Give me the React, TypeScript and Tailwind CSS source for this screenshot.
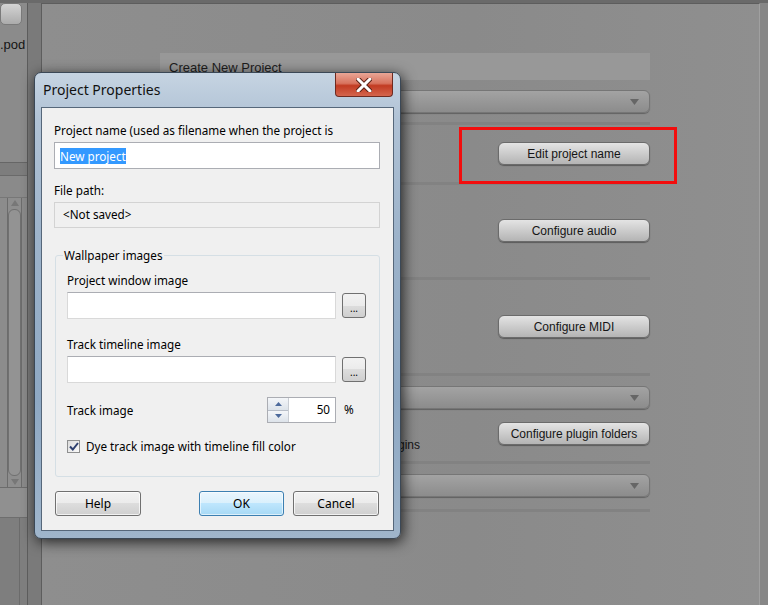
import React from "react";

function BgButton({ label }: { label: string }) {
  return (
    <div className="flex h-[23px] w-[152px] items-center justify-center rounded-[6px] border border-[#6b6b6b] bg-gradient-to-b from-[#e4e4e4] to-[#b4b4b4] text-[12px] text-[#151515] shadow-[0_1px_1px_rgba(0,0,0,0.35)]">
      {label}
    </div>
  );
}

function BgDropdown() {
  return (
    <div className="flex h-[23px] items-center justify-end rounded-[6px] border border-[#767676] bg-gradient-to-b from-[#a3a3a3] to-[#8c8c8c] pr-[10px] shadow-[0_1px_1px_rgba(0,0,0,0.3)]">
      <svg width="9" height="6" viewBox="0 0 9 6">
        <path d="M0 0 H9 L4.5 6 Z" fill="#666" />
      </svg>
    </div>
  );
}

function Sep() {
  return <div className="h-[3px] bg-[#828282]" />;
}

function WinButton({ label, focused }: { label: string; focused?: boolean }) {
  return (
    <div
      className={
        focused
          ? "flex h-[25px] w-[85px] items-center justify-center rounded-[3px] border border-[#3c7fb1] bg-[linear-gradient(#eaf6fd,#d9f0fc_50%,#bee6fd_50%,#a7d9f5)] text-[12px] text-black shadow-[inset_0_0_0_1px_rgba(255,255,255,0.6)]"
          : "flex h-[25px] w-[86px] items-center justify-center rounded-[3px] border border-[#707070] bg-[linear-gradient(#f2f2f2,#ebebeb_50%,#dddddd_50%,#cfcfcf)] text-[12px] text-black shadow-[inset_0_0_0_1px_rgba(255,255,255,0.7)]"
      }
    >
      {label}
    </div>
  );
}

function Browse() {
  return (
    <div className="ml-[6px] flex h-[25px] w-[24px] items-end justify-center rounded-[3px] border border-[#707070] bg-[linear-gradient(#f2f2f2,#ebebeb_50%,#dddddd_50%,#cfcfcf)] pb-[4px] text-[10px] leading-none text-black">
      ...
    </div>
  );
}

export default function App() {
  return (
    <div className="relative h-[605px] w-[768px] overflow-hidden bg-[#7c7c7c] font-['Liberation_Sans',Arial,sans-serif]">
      <div className="flex h-full border-t-[3px] border-[#6a6a6a]">
        {/* left side panels */}
        <div className="flex w-[28px] flex-col border-r border-[#5c5c5c]">
          <div className="h-[159px] bg-[#8b8b8b]">
            <div className="h-[22px] w-[22px] rounded-[5px] border border-[#7a7a7a] bg-gradient-to-b from-[#d4d4d4] to-[#ababab]" />
            <div className="mt-[13px] text-[13px] leading-none text-[#141414]">.pod</div>
          </div>
          <div className="h-[13px] border-t border-[#666] bg-[#7d7d7d]" />
          <div className="flex h-[313px] flex-col border-t border-[#6a6a6a] bg-[#8a8a8a]">
            <div className="h-[22px] border-b border-[#777]" />
            <div className="flex flex-1 border-b border-[#6c6c6c]">
              <div className="w-[7px] bg-[#8c8c8c]" />
              <div className="flex w-[15px] flex-col items-center border-x border-[#6c6c6c] bg-[#8e8e8e] py-[2px]">
                <svg width="8" height="6" viewBox="0 0 8 6">
                  <path d="M4 0 L8 6 H0 Z" fill="#777" />
                </svg>
                <div className="mt-[3px] w-[13px] flex-1 rounded-[6px] border border-[#707070] bg-[#939393]" />
                <svg className="mt-[3px]" width="8" height="6" viewBox="0 0 8 6">
                  <path d="M0 0 H8 L4 6 Z" fill="#777" />
                </svg>
              </div>
            </div>
          </div>
          <div className="h-[30px] border-b border-[#6e6e6e] bg-[#909090]" />
          <div className="flex flex-1 bg-[#7e7e7e]">
            <div className="w-[20px] border-r border-[#6b6b6b]" />
          </div>
        </div>
        <div className="w-[13px] bg-[#7a7a7a]" />
        {/* main panel */}
        <div className="flex w-[719px] border-l border-r border-t border-[#5d5d5d] border-r-[#a0a0a0] bg-[linear-gradient(90deg,#8e8e8e,#8a8a8a_60%,#8f8f8f)]">
          <div className="ml-[118px] flex w-[490px] flex-col pt-[49px]">
            <div className="h-[27px] bg-[#989898] px-[9px] pt-[8px] text-[13px] leading-none text-[#1d1d1d]">
              Create New Project
            </div>
            <div className="mt-[10px]">
              <BgDropdown />
            </div>
            <div className="mt-[9px]">
              <Sep />
            </div>
            <div className="mt-[17px] flex justify-end">
              <BgButton label="Edit project name" />
            </div>
            <div className="mt-[17px]">
              <Sep />
            </div>
            <div className="mt-[34px] flex justify-end">
              <BgButton label="Configure audio" />
            </div>
            <div className="mt-[35px]">
              <Sep />
            </div>
            <div className="mt-[35px] flex justify-end">
              <BgButton label="Configure MIDI" />
            </div>
            <div className="mt-[35px]">
              <Sep />
            </div>
            <div className="mt-[10px]">
              <BgDropdown />
            </div>
            <div className="mt-[13px] flex h-[23px] justify-between">
              <div className="mt-[14px] w-[260px] text-right text-[12px] leading-[18px] text-[#151515]">Use VST plugins</div>
              <BgButton label="Configure plugin folders" />
            </div>
            <div className="mt-[16px]">
              <Sep />
            </div>
            <div className="mt-[10px]">
              <BgDropdown />
            </div>
            <div className="mt-[12px]">
              <Sep />
            </div>
          </div>
        </div>
        <div className="flex-1 bg-[#878787]" />
      </div>

      {/* annotation */}
      <div className="absolute left-[459px] top-[127px] h-[57px] w-[218px] border-[3px] border-[#f20d0d]" />

      {/* dialog */}
      <div className="absolute left-[34px] top-[72px] flex h-[467px] w-[367px] flex-col rounded-[7px] border border-[#3b4856] bg-[linear-gradient(180deg,#c6d4e2,#b0c2d5_10%,#9db3ca_35%,#8ea8c3_70%,#9fb5cb)] px-[6px] pb-[7px] shadow-[2px_3px_14px_rgba(0,0,0,0.75)]">
        <div className="relative h-[34px]">
          <div className="pl-[2px] pt-[10px] font-['Noto_Sans',sans-serif] text-[14px] leading-none text-[#111]">
            Project Properties
          </div>
          <div className="absolute right-[1px] top-0 flex h-[24px] w-[58px] items-center justify-center rounded-b-[4px] border border-t-0 border-[#6e2a20] bg-[linear-gradient(#e9a696,#d8735e_45%,#c23b22_55%,#d4654d)]">
            <svg width="16" height="14" viewBox="0 0 16 14">
              <path d="M2 1 L14 13 M14 1 L2 13" stroke="#5b2217" strokeWidth="5" strokeLinecap="round" />
              <path d="M2 1 L14 13 M14 1 L2 13" stroke="#fff" strokeWidth="3" strokeLinecap="round" />
            </svg>
          </div>
        </div>
        <div className="flex flex-1 flex-col border border-[#56677a] bg-[#f0f0f0] pl-[12px] pr-[13px] font-['Noto_Sans',sans-serif] text-[11.7px] text-black">
          <div className="mt-[13px] leading-[18px]">Project name (used as filename when the project is</div>
          <div className="mt-[3px] flex h-[27px] items-center border border-[#abadb3] bg-white px-[5px]">
            <span className="bg-[#3399ff] leading-[16px] text-white">New project</span>
          </div>
          <div className="mt-[12px] leading-[18px]">File path:</div>
          <div className="mt-[3px] flex h-[26px] items-center border border-[#d3d3d3] bg-[#f0f0f0] px-[8px]">
            &lt;Not saved&gt;
          </div>
          <div className="relative ml-[1px] mt-[27px] h-[222px] w-[325px] rounded-[3px] border border-[#d5dfe5] px-[11px]">
            <div className="absolute left-[7px] top-[-10px] bg-[#f0f0f0] px-[1px] leading-[18px]">Wallpaper images</div>
            <div className="mt-[15px] leading-[18px]">Project window image</div>
            <div className="mt-[3px] flex items-center">
              <div className="h-[27px] w-[269px] border border-[#d9d9d9] border-t-[#abadb3] bg-white" />
              <Browse />
            </div>
            <div className="mt-[16px] leading-[18px]">Track timeline image</div>
            <div className="mt-[3px] flex items-center">
              <div className="h-[27px] w-[269px] border border-[#d9d9d9] border-t-[#abadb3] bg-white" />
              <Browse />
            </div>
            <div className="mt-[14px] flex items-center">
              <div className="w-[200px] leading-[18px]">Track image</div>
              <div className="flex h-[26px] w-[69px] border border-[#abadb3] bg-white">
                <div className="flex w-[21px] flex-col border-r border-[#c9cdd3]">
                  <div className="flex flex-1 items-center justify-center border-b border-[#b8bec8] bg-gradient-to-b from-[#f4f6f9] to-[#dde3ea]">
                    <svg width="7" height="4" viewBox="0 0 7 4">
                      <path d="M3.5 0 L7 4 H0 Z" fill="#4d6a9c" />
                    </svg>
                  </div>
                  <div className="flex flex-1 items-center justify-center bg-gradient-to-b from-[#f4f6f9] to-[#dde3ea]">
                    <svg width="7" height="4" viewBox="0 0 7 4">
                      <path d="M0 0 H7 L3.5 4 Z" fill="#4d6a9c" />
                    </svg>
                  </div>
                </div>
                <div className="flex flex-1 items-center justify-end pr-[5px]">50</div>
              </div>
              <div className="ml-[8px]">%</div>
            </div>
            <div className="mt-[14px] flex items-center">
              <div className="flex h-[13px] w-[13px] items-center justify-center border border-[#8e8f8f] bg-gradient-to-br from-[#dcdcdc] to-[#fafafa]">
                <svg width="10" height="9" viewBox="0 0 10 9">
                  <path d="M1 4.5 L3.8 7.5 L9 1" stroke="#2d3f6e" strokeWidth="2" fill="none" />
                </svg>
              </div>
              <div className="ml-[6px] leading-[18px]">Dye track image with timeline fill color</div>
            </div>
          </div>
          <div className="mt-[14px] flex">
            <div className="ml-[1px]">
              <WinButton label="Help" />
            </div>
            <div className="ml-[58px]">
              <WinButton label="OK" focused />
            </div>
            <div className="ml-[9px]">
              <WinButton label="Cancel" />
            </div>
          </div>
        </div>
      </div>
    </div>
  );
}
